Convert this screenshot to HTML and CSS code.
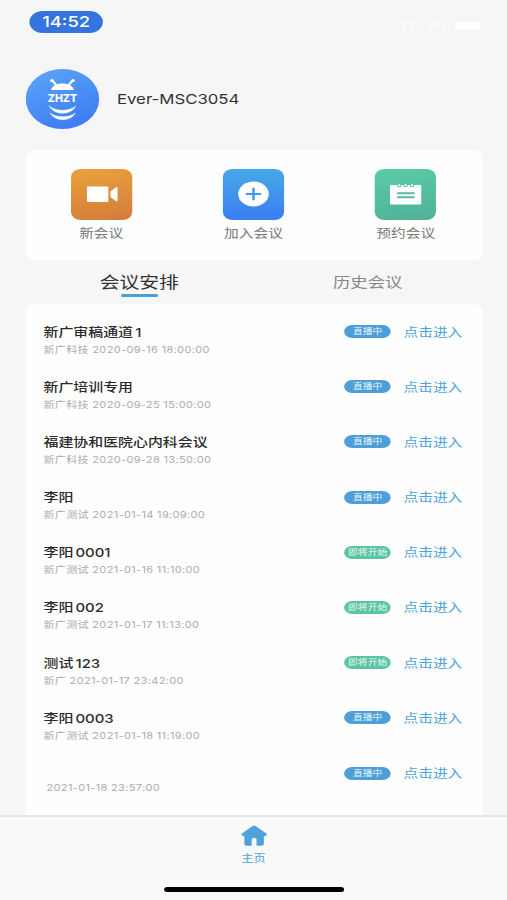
FILE: index.html
```html
<!DOCTYPE html>
<html lang="zh-CN">
<head>
  <meta charset="UTF-8">
  <meta name="viewport" content="width=device-width, initial-scale=1.0">
  <title>会议</title>
  <link rel="stylesheet" href="styles.css">
</head>
<body>
  <div class="phone">
    <div class="status-bar">
      <span class="time">14:52</span>
      <div class="status-icons">
        <span class="signal"></span>
        <span class="network">4G</span>
        <span class="battery"></span>
      </div>
    </div>

    <div class="profile">
      <svg class="avatar" viewBox="0 0 60 60">
        <defs>
          <linearGradient id="avatarBg" x1="0.2" y1="0" x2="0.7" y2="1">
            <stop offset="0" stop-color="#5ba3f8"/>
            <stop offset="1" stop-color="#3b7bf3"/>
          </linearGradient>
        </defs>
        <circle cx="30" cy="30" r="30" fill="url(#avatarBg)"/>
        <g fill="#fff" stroke="#fff" stroke-linecap="round">
          <path d="M20.600 21C21.500 17 25 14.600 30 14.600s8.500 2.400 9.400 6.400z" stroke="none"/>
          <path d="M25 16l-3-4M35 16l3-4" stroke-width="2"/>
          <circle cx="21.400" cy="11.600" r="1.500" stroke="none"/>
          <circle cx="38.600" cy="11.600" r="1.500" stroke="none"/>
          <path d="M19.300 37.200c5.500 5.400 16 5.400 21.500 0-4 9.400-17.500 9.400-21.500 0zM20 44c5 5 15.500 5 20.500 0-3.800 8.900-16.700 8.900-20.500 0z" stroke-width=".4"/>
        </g>
        <text x="18" y="33.500" textLength="24" lengthAdjust="spacingAndGlyphs">ZHZT</text>
      </svg>
      <span class="username">Ever-MSC3054</span>
    </div>

    <div class="actions">
      <div class="action">
        <div class="action-icon orange">
          <svg viewBox="0 0 50 50">
            <rect x="13" y="17.500" width="17.500" height="15.500" rx="1"/>
            <path d="M32.200 22.500l4.300-4q1.500-.8 1.500.6v12.300q0 1.400-1.500.6l-4.300-4z"/>
          </svg>
        </div>
        <span>新会议</span>
      </div>
      <div class="action">
        <div class="action-icon blue">
          <svg viewBox="0 0 50 50">
            <circle cx="25" cy="25" r="12.500"/>
            <path d="M25 19.500v11M19.500 25h11" stroke="#4196ee" stroke-width="2" stroke-linecap="round"/>
          </svg>
        </div>
        <span>加入会议</span>
      </div>
      <div class="action">
        <div class="action-icon green">
          <svg viewBox="0 0 50 50">
            <rect x="12.500" y="16" width="25.500" height="19.500" rx="1"/>
            <g fill="#fff" stroke="#56c3a3" stroke-width=".9">
              <circle cx="20" cy="16.300" r="1.500"/>
              <circle cx="25.200" cy="16.300" r="1.500"/>
              <circle cx="30.400" cy="16.300" r="1.500"/>
            </g>
            <path d="M19 24.200h12.800M19 28.300h12.800" stroke="#54bc9e" stroke-width="1.900" stroke-linecap="round"/>
          </svg>
        </div>
        <span>预约会议</span>
      </div>
    </div>

    <div class="tabs">
      <div class="tab active"><span>会议安排</span></div>
      <div class="tab"><span>历史会议</span></div>
    </div>

    <div class="meetings">
      <div class="meeting">
        <div class="info">
          <p class="title">新广审稿通道 1</p>
          <p class="date">新广科技 2020-09-16 18:00:00</p>
        </div>
        <span class="badge live">直播中</span>
        <a class="enter" href="#">点击进入</a>
      </div>
      <div class="meeting">
        <div class="info">
          <p class="title">新广培训专用</p>
          <p class="date">新广科技 2020-09-25 15:00:00</p>
        </div>
        <span class="badge live">直播中</span>
        <a class="enter" href="#">点击进入</a>
      </div>
      <div class="meeting">
        <div class="info">
          <p class="title">福建协和医院心内科会议</p>
          <p class="date">新广科技 2020-09-28 13:50:00</p>
        </div>
        <span class="badge live">直播中</span>
        <a class="enter" href="#">点击进入</a>
      </div>
      <div class="meeting">
        <div class="info">
          <p class="title">李阳</p>
          <p class="date">新广测试 2021-01-14 19:09:00</p>
        </div>
        <span class="badge live">直播中</span>
        <a class="enter" href="#">点击进入</a>
      </div>
      <div class="meeting">
        <div class="info">
          <p class="title">李阳 0001</p>
          <p class="date">新广测试 2021-01-16 11:10:00</p>
        </div>
        <span class="badge soon">即将开始</span>
        <a class="enter" href="#">点击进入</a>
      </div>
      <div class="meeting">
        <div class="info">
          <p class="title">李阳 002</p>
          <p class="date">新广测试 2021-01-17 11:13:00</p>
        </div>
        <span class="badge soon">即将开始</span>
        <a class="enter" href="#">点击进入</a>
      </div>
      <div class="meeting">
        <div class="info">
          <p class="title">测试 123</p>
          <p class="date">新广 2021-01-17 23:42:00</p>
        </div>
        <span class="badge soon">即将开始</span>
        <a class="enter" href="#">点击进入</a>
      </div>
      <div class="meeting">
        <div class="info">
          <p class="title">李阳 0003</p>
          <p class="date">新广测试 2021-01-18 11:19:00</p>
        </div>
        <span class="badge live">直播中</span>
        <a class="enter" href="#">点击进入</a>
      </div>
      <div class="meeting">
        <div class="info untitled">
          <p class="date">2021-01-18 23:57:00</p>
        </div>
        <span class="badge live">直播中</span>
        <a class="enter" href="#">点击进入</a>
      </div>
    </div>

    <div class="tabbar">
      <svg class="home" viewBox="0 0 21 21">
        <path d="M9.300 1q1.200-1 2.400 0l8.500 7.300q1.200 1.200.3 2.100-.5.600-2 .6v7.500q0 2.200-2 2.200h-4v-6.500q0-1.200-2-1.200t-2 1.200v6.500h-4q-2 0-2-2.200V11q-1.500 0-2-.6-.9-.9.3-2.100z"/>
      </svg>
      <span>主页</span>
      <div class="home-indicator"></div>
    </div>
  </div>
</body>
</html>
```

FILE: styles.css
```css
* {
  box-sizing: border-box;
}
body {
  margin: 0;
  padding: 0;
  height: 900px;
  overflow: hidden;
  background-color: #f6f6f6;
  font-family: Inter, "Noto Sans CJK SC", sans-serif;
}
.phone {
  width: 414px;
  height: 900px;
  display: flex;
  flex-direction: column;
  transform: scaleX(1.2246);
  transform-origin: 0 0;
}
.status-bar {
  height: 69px;
  flex: none;
  padding: 11px 22px 0 24px;
  display: flex;
  justify-content: space-between;
  align-items: flex-start;
}
.time {
  width: 60px;
  height: 22px;
  border-radius: 11px;
  background-color: #3474dc;
  color: #fff;
  font-size: 15px;
  font-weight: 500;
  line-height: 22px;
  text-align: center;
}
.status-icons {
  display: flex;
  align-items: center;
  gap: 8px;
  padding-top: 9px;
  color: #fff;
}
.signal {
  width: 8px;
  height: 9px;
  margin-right: 5px;
  border: 2px solid #fcfcfc;
  border-bottom: none;
}
.network {
  font-size: 10px;
  line-height: 12px;
}
.battery {
  width: 20px;
  height: 8px;
  background-color: #fff;
}
.profile {
  height: 60px;
  flex: none;
  padding-left: 20.5px;
  display: flex;
  align-items: center;
  gap: 15px;
}
.avatar {
  width: 60px;
  height: 60px;
}
.avatar text {
  fill: #fff;
  font-size: 11px;
  font-weight: 800;
}
.username {
  color: #333;
  font-size: 13.7px;
}
.actions {
  height: 110px;
  flex: none;
  margin: 21px 20.5px 0;
  padding-top: 19px;
  display: flex;
  border-radius: 6px;
  background-color: #fefefe;
}
.action {
  flex: 1;
  display: flex;
  flex-direction: column;
  align-items: center;
  color: #777;
  font-size: 12px;
  line-height: 18px;
}
.action-icon {
  width: 50px;
  height: 51px;
  margin-bottom: 5px;
  border-radius: 8px;
}
.action-icon svg {
  display: block;
  width: 50px;
  height: 50px;
  fill: #fff;
}
.orange {
  background: linear-gradient(170deg, #e9a23c, #d57b3b);
}
.blue {
  background: linear-gradient(#46a9e6, #3b7df2);
}
.green {
  background: linear-gradient(170deg, #5acba7, #50b198);
}
.tabs {
  height: 44px;
  flex: none;
  margin: 0 20.5px;
  display: flex;
}
.tab {
  flex: 1;
  display: flex;
  flex-direction: column;
  align-items: center;
  padding-top: 10px;
  color: #888;
  font-size: 14.2px;
  line-height: 24px;
}
.tab.active {
  color: #333;
  font-size: 16.2px;
}
.tab.active::after {
  content: "";
  width: 30px;
  height: 3px;
  border-radius: 1px;
  background-color: #4a9fd6;
}
.meetings {
  height: 511px;
  flex: none;
  margin: 0 20.5px;
  padding: 18.5px 16px 0 15px;
  overflow: hidden;
  border-radius: 8px 8px 0 0;
  background-color: #fefefe;
}
.meeting {
  height: 55.2px;
  display: flex;
  align-items: flex-start;
}
.info {
  flex: 1;
}
.title {
  margin: 0;
  color: #2b2b2b;
  font-size: 12.2px;
  font-weight: 500;
  line-height: 19px;
  word-spacing: -1.5px;
}
.date {
  margin: 0;
  color: #aaa;
  font-size: 9px;
  line-height: 15px;
  letter-spacing: 0.27px;
}
.untitled {
  padding: 15.5px 0 0 2.5px;
}
.badge {
  width: 38.5px;
  height: 13px;
  margin: 2.5px 10px 0 0;
  border-radius: 6.5px;
  color: #e8f8f8;
  font-size: 8px;
  line-height: 13px;
  text-align: center;
}
.live {
  background-color: #4c9fd8;
}
.soon {
  background-color: #5bc4a2;
}
.enter {
  color: #4fa3da;
  font-size: 12px;
  line-height: 19px;
  text-decoration: none;
}
.tabbar {
  height: 85px;
  flex: none;
  padding-top: 8px;
  display: flex;
  flex-direction: column;
  align-items: center;
  border-top: 2px solid #e6e6e6;
  background-color: #f9f9f9;
  color: #4fa3da;
  font-size: 10px;
  line-height: 14px;
}
.home {
  width: 21px;
  height: 21px;
  margin-bottom: 5px;
  fill: #4fa3da;
}
.home-indicator {
  width: 147px;
  height: 5px;
  margin-top: 22px;
  border-radius: 3px;
  background-color: #000;
}
```
